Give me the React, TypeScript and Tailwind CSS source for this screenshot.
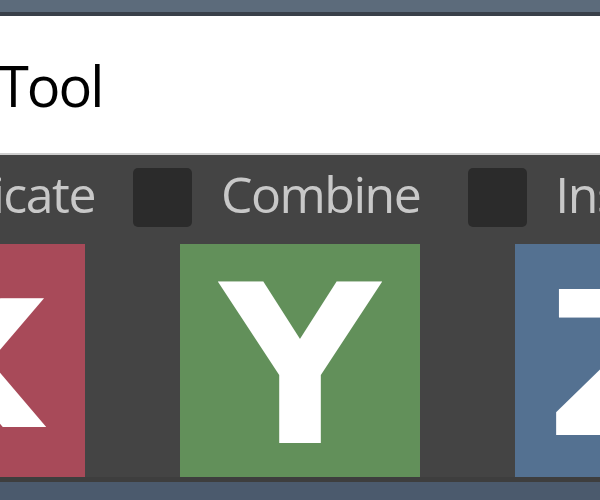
import React from 'react';

const AxisBlock: React.FC<{ letter: string; color: string; size: string }> = ({ letter, color, size }) => {
  return (
    <div className={`w-[240px] h-[233px] shrink-0 flex items-center justify-center pt-[12px] ${color}`}>
      <span className={`text-white font-bold leading-none font-['DejaVu_Sans',sans-serif] ${size}`}>{letter}</span>
    </div>
  );
};

const Check: React.FC = () => <div className="w-[59px] h-[59px] shrink-0 rounded-[5px] bg-[#2b2b2b]" />;

export default function App() {
  return (
    <div className="w-[600px] h-[500px] overflow-hidden bg-[#444444] flex flex-col font-['Open_Sans',sans-serif]">
      <div className="h-[12px] shrink-0 bg-[#5c6b7b]" />
      <div className="h-[4px] shrink-0 bg-[#394049]" />
      <div className="h-[137px] shrink-0 bg-white flex items-center">
        <span className="text-[56px] leading-none text-black tracking-[-2px] -ml-[2px]">Tool</span>
      </div>
      <div className="h-[2px] shrink-0 bg-[#cfcfcf]" />

      <div className="h-[89px] shrink-0 flex items-start pt-[13px] whitespace-nowrap text-[#c8c8c8] text-[50px] leading-none tracking-[-1.5px]">
        <div className="w-[95px] shrink-0 flex justify-end">
          <span className="mt-[1px]">Duplicate</span>
        </div>
        <div className="ml-[38px]"><Check /></div>
        <span className="ml-[29px] mt-[1px]">Combine</span>
        <div className="ml-[48px]"><Check /></div>
        <span className="ml-[28px] mt-[1px]">Instance</span>
      </div>

      <div className="h-[233px] shrink-0 flex justify-center gap-[95px]">
        <AxisBlock letter="X" color="bg-[#a84a59]" size="text-[177px] scale-x-125" />
        <AxisBlock letter="Y" color="bg-[#62905a]" size="text-[221px]" />
        <AxisBlock letter="Z" color="bg-[#547191]" size="text-[199px] scale-x-125" />
      </div>

      <div className="h-[5px] shrink-0 bg-[#3e3e3e]" />
      <div className="flex-1 bg-[#4b5a6d]" />
    </div>
  );
}
